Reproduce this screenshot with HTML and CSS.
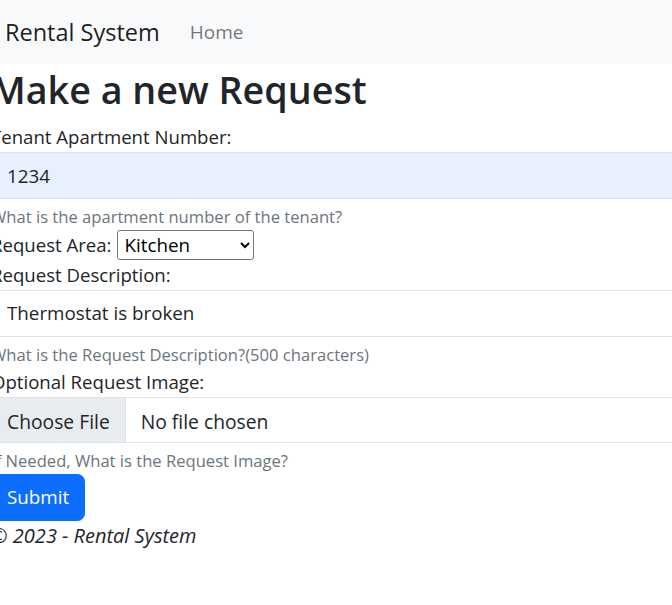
FILE: index.html
```html
<!DOCTYPE html>
<html lang="en">
<head>
<meta charset="utf-8">
<title>Make a new Request - Rental System</title>
<link rel="stylesheet" href="styles.css">
</head>
<body>
<header class="navbar">
  <a class="brand" href="#">Rental System</a>
  <a class="nav-link" href="#">Home</a>
</header>
<main class="content">
  <h1 class="title">Make a new Request</h1>
  <form class="request-form">
    <label class="form-label" for="apt">Tenant Apartment Number:</label>
    <input class="form-control autofilled" id="apt" type="text" value="1234">
    <div class="form-text">What is the apartment number of the tenant?</div>

    <div class="area-row">
      <label class="inline-label" for="area">Request Area:</label>
      <select class="area-select" id="area">
        <option>Kitchen</option>
        <option>Bathroom</option>
        <option>Bedroom</option>
        <option>Living Room</option>
      </select>
    </div>

    <label class="form-label" for="desc">Request Description:</label>
    <input class="form-control" id="desc" type="text" value="Thermostat is broken">
    <div class="form-text">What is the Request Description?(500 characters)</div>

    <label class="form-label" for="img">Optional Request Image:</label>
    <input class="form-control file-control" id="img" type="file">
    <div class="form-text">If Needed, What is the Request Image?</div>

    <button class="btn-primary" type="submit">Submit</button>
  </form>
  <footer class="footer">&copy; 2023 - Rental System</footer>
</main>
</body>
</html>
```
FILE: styles.css
```css
html, body {
  margin: 0;
  padding: 0;
}
body {
  font-family: "Open Sans", "Liberation Sans", sans-serif;
  font-size: 18.6px;
  line-height: 30px;
  color: #212529;
  background: #fff;
  overflow: hidden;
}
.navbar {
  height: 64px;
  background: #f8f9fa;
  display: flex;
  align-items: center;
  padding-left: 5px;
  box-sizing: border-box;
}
.brand {
  font-size: 23.5px;
  color: rgba(0, 0, 0, 0.9);
  text-decoration: none;
  margin-right: 20px;
  line-height: 36px;
}
.nav-link {
  font-size: 19px;
  color: rgba(0, 0, 0, 0.55);
  text-decoration: none;
  padding: 0 10px;
  line-height: 30px;
}
.content {
  margin-left: -9px;
  width: 720px;
}
.title {
  margin: 0 0 8px;
  padding-top: 2px;
  font-size: 37.7px;
  font-weight: 600;
  line-height: 48px;
}
.request-form {
  display: flex;
  flex-direction: column;
  align-items: flex-start;
}
.form-label {
  display: block;
  height: 30px;
}
.form-control {
  display: block;
  width: 100%;
  box-sizing: border-box;
  height: 47px;
  padding: 7.5px 15px;
  font-family: inherit;
  font-size: 18.8px;
  line-height: 30px;
  color: #212529;
  background: #fff;
  border: 1px solid #dee2e6;
  border-radius: 7.5px;
  margin: 0;
}
.autofilled {
  background: #e8f0fe;
}
.file-control {
  height: 46px;
  overflow: hidden;
  font-size: 19.3px;
}
.file-control::file-selector-button {
  padding: 7.5px 15px;
  margin: -7.5px 15px -7.5px -15px;
  height: 46px;
  font-family: inherit;
  font-size: 19.3px;
  color: #212529;
  background: #e9ecef;
  border: 0 solid #dee2e6;
  border-right-width: 1px;
  border-radius: 0;
}
.form-text {
  margin-top: 5px;
  font-size: 16.6px;
  line-height: 25.5px;
  color: #6c757d;
}
.area-row {
  display: flex;
  align-items: center;
  gap: 6px;
  height: 30px;
}
.area-select {
  width: 137px;
  height: 30px;
  font-family: inherit;
  font-size: 18.8px;
  color: #000;
  border: 1px solid #767676;
  border-radius: 3px;
  background: #fff;
  padding: 0 2px;
}
.btn-primary {
  height: 47px;
  padding: 7.5px 15px;
  font-family: inherit;
  font-size: 18.8px;
  line-height: 30px;
  color: #fff;
  background: #0d6efd;
  border: 1px solid #0d6efd;
  border-radius: 7.5px;
}
.footer {
  font-style: italic;
  font-size: 20px;
  line-height: 30px;
}
```
